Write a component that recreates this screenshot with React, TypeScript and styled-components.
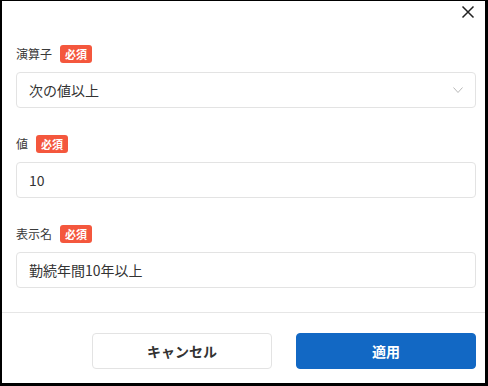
import React from "react";
import styled, { createGlobalStyle } from "styled-components";

const Global = createGlobalStyle`
  html, body { margin: 0; padding: 0; background: #ffffff; }
  body { font-family: "Noto Sans CJK JP", "Noto Sans", sans-serif; }
  * { box-sizing: border-box; }
`;

const Frame = styled.div`
  width: 488px;
  height: 386px;
  background: #ffffff;
  border-style: solid;
  border-color: #000000;
  border-width: 1px 3px 3px 2px;
  display: flex;
  flex-direction: column;
  overflow: hidden;
`;

const Header = styled.div`
  height: 44px;
  display: flex;
  justify-content: flex-end;
  align-items: flex-start;
  padding: 4px 10px 0 0;
`;

const CloseButton = styled.button`
  border: none;
  background: transparent;
  padding: 0;
  width: 14px;
  height: 14px;
  display: flex;
  cursor: pointer;
`;

const Form = styled.div`
  display: flex;
  flex-direction: column;
  gap: 27px;
  padding: 0 9px 24px 14px;
`;

const Group = styled.div`
  display: flex;
  flex-direction: column;
  gap: 9px;
`;

const LabelRow = styled.div`
  display: flex;
  align-items: center;
  gap: 8px;
  height: 18px;
`;

const LabelText = styled.span`
  font-size: 12px;
  color: #3a3a3a;
  line-height: 18px;
`;

const Badge = styled.span`
  display: inline-flex;
  align-items: center;
  justify-content: center;
  height: 18px;
  padding: 0 5px;
  border-radius: 3px;
  background: #f4573d;
  color: #ffffff;
  font-size: 11px;
  font-weight: 700;
  line-height: 18px;
`;

const Field = styled.div`
  height: 36px;
  border: 1px solid #e3e3e3;
  border-radius: 4px;
  display: flex;
  align-items: center;
  justify-content: space-between;
  padding: 0 12px 0 12px;
  font-size: 14px;
  color: #333333;
`;

const Chevron = styled.svg`
  width: 10px;
  height: 6px;
  flex: none;
`;

const Divider = styled.div`
  height: 1px;
  background: #e6e6e6;
`;

const Footer = styled.div`
  display: flex;
  justify-content: flex-end;
  gap: 24px;
  padding: 20px 9px 0 0;
`;

const Button = styled.button<{ $primary?: boolean }>`
  width: 180px;
  height: 36px;
  border-radius: 4px;
  font-family: "Noto Sans CJK JP", "Noto Sans", sans-serif;
  font-size: 14px;
  font-weight: 700;
  cursor: pointer;
  border: 1px solid ${(p) => (p.$primary ? "#1268c4" : "#e3e3e3")};
  background: ${(p) => (p.$primary ? "#1268c4" : "#ffffff")};
  color: ${(p) => (p.$primary ? "#ffffff" : "#333333")};
`;

const fields = [
  { label: "演算子", value: "次の値以上", select: true },
  { label: "値", value: "10", select: false },
  { label: "表示名", value: "勤続年間10年以上", select: false },
];

export default function App() {
  return (
    <>
      <Global />
      <Frame>
        <Header>
          <CloseButton aria-label="閉じる">
            <svg width="14" height="14" viewBox="0 0 14 14">
              <path d="M1.5 1.5 L12.5 12.5 M12.5 1.5 L1.5 12.5" stroke="#222" strokeWidth="1.5" fill="none" />
            </svg>
          </CloseButton>
        </Header>
        <Form>
          {fields.map((f) => (
            <Group key={f.label}>
              <LabelRow>
                <LabelText>{f.label}</LabelText>
                <Badge>必須</Badge>
              </LabelRow>
              <Field>
                <span>{f.value}</span>
                {f.select && (
                  <Chevron viewBox="0 0 10 6">
                    <path d="M0.5 0.5 L5 5.5 L9.5 0.5" stroke="#b8b8b8" strokeWidth="1" fill="none" />
                  </Chevron>
                )}
              </Field>
            </Group>
          ))}
        </Form>
        <Divider />
        <Footer>
          <Button>キャンセル</Button>
          <Button $primary>適用</Button>
        </Footer>
      </Frame>
    </>
  );
}
